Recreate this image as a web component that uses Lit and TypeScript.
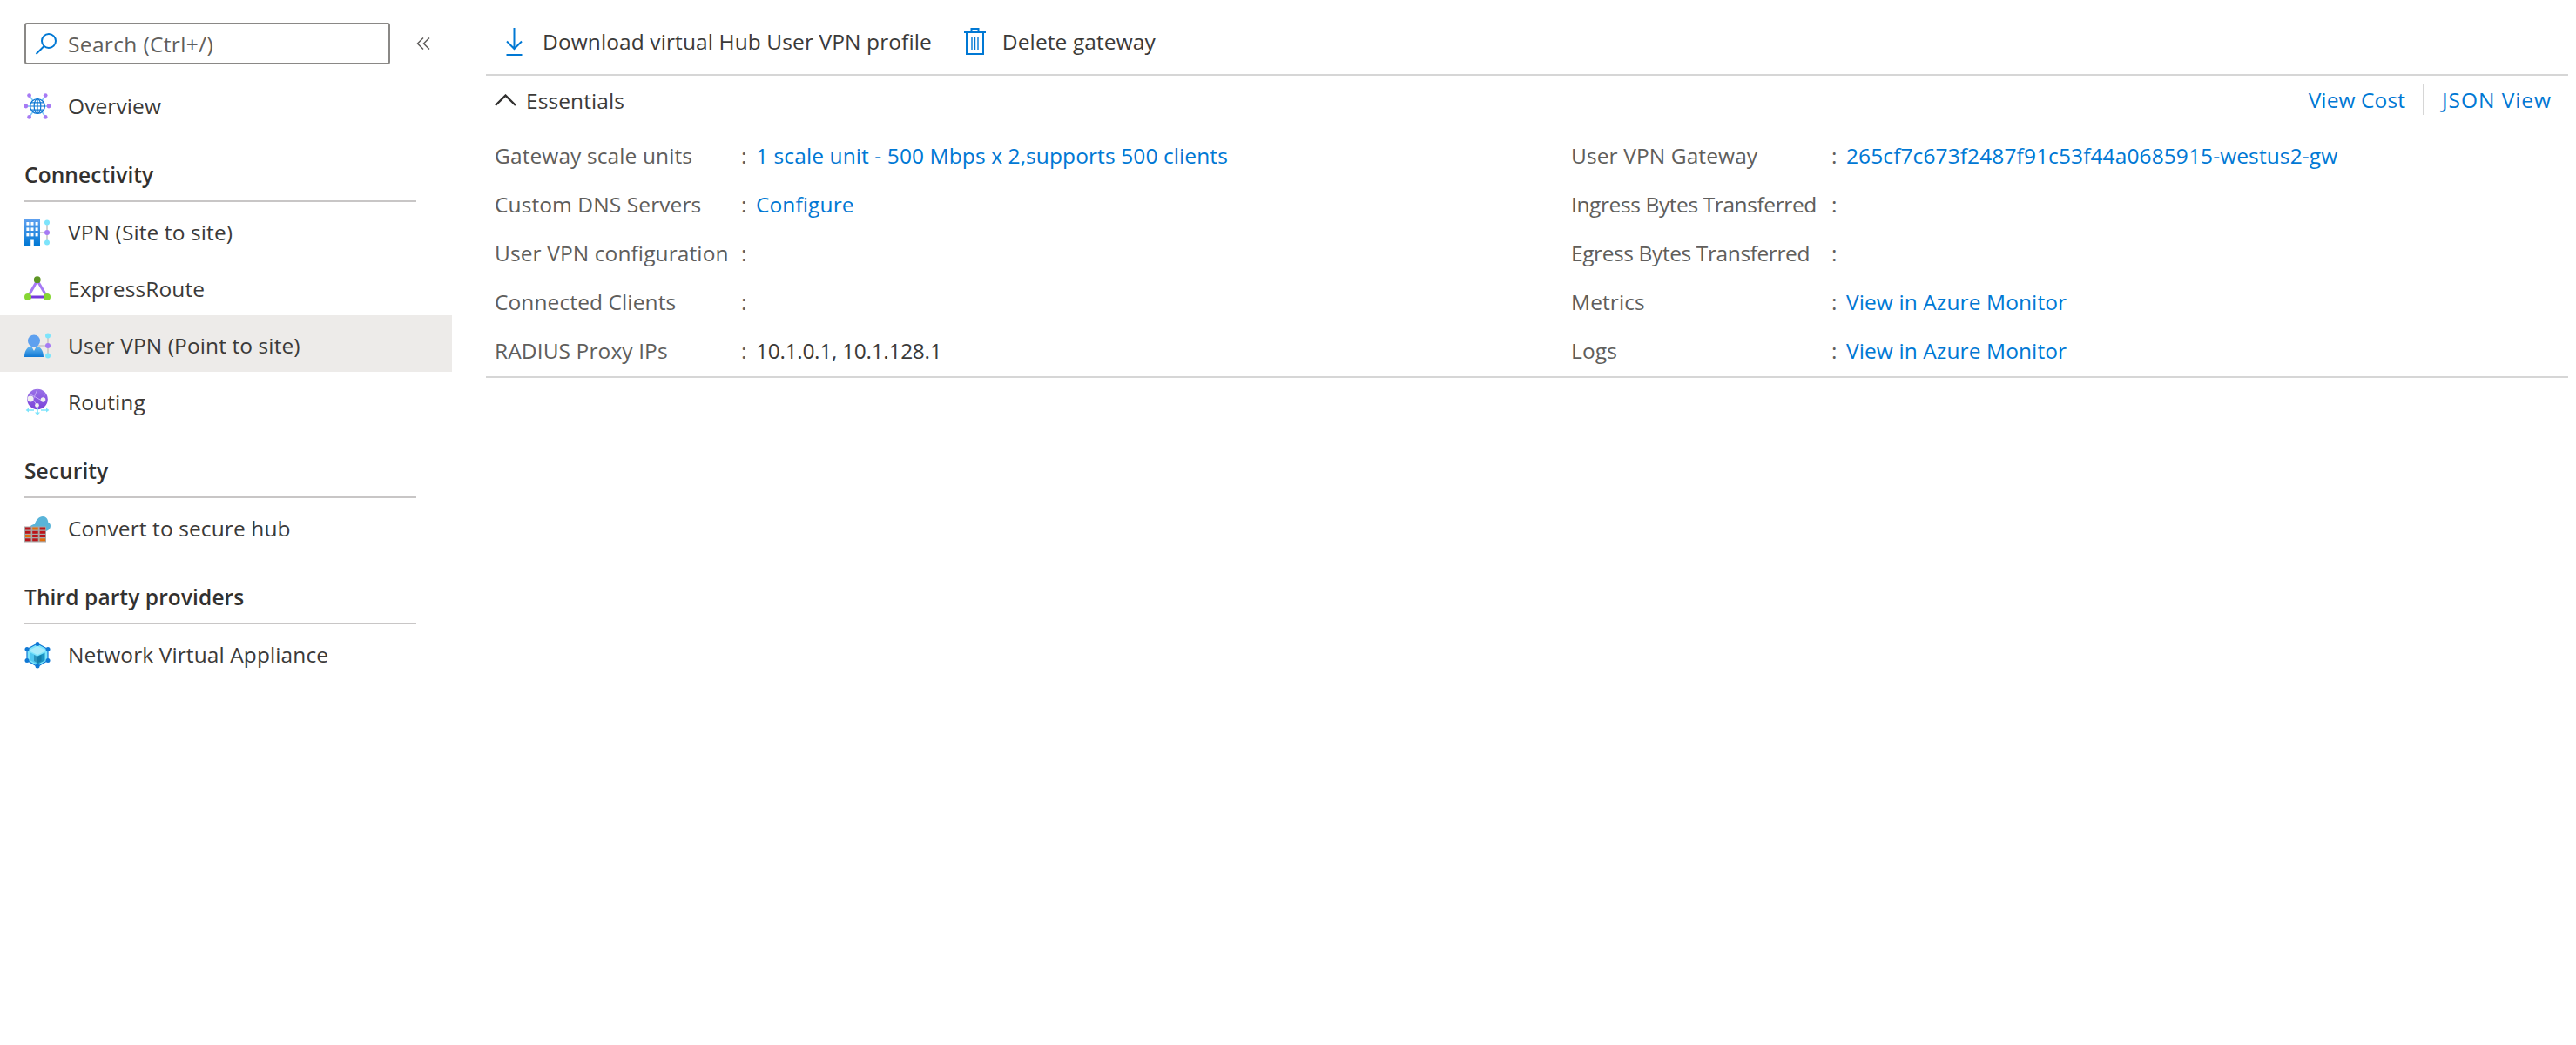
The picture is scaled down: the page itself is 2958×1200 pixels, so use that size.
import { LitElement, html, css, svg } from "lit";
import { customElement } from "lit/decorators.js";

const connector = svg`
  <path d="M26 3V27M18 15H26" stroke="#c8c6c6" stroke-width="1.6" fill="none"/>
  <circle cx="26" cy="3.4" r="3" fill="#7de4fb"/>
  <circle cx="26" cy="15" r="3" fill="#a67af4"/>
  <circle cx="26" cy="26.6" r="3" fill="#7de4fb"/>`;

const icons: Record<string, unknown> = {
  overview: html`<svg viewBox="0 0 30 30" class="ico">
    <path d="M5.4 2.5 11 10M24.4 2.5 19 10M5.4 27.5 11 20M24.4 27.5 19 20M1.5 15H7M28 15H22" stroke="#7ec8f5" stroke-width="1.4"/>
    <circle cx="15" cy="15" r="8.4" fill="#fff" stroke="#0f78d4" stroke-width="1.4"/>
    <ellipse cx="15" cy="15" rx="3.8" ry="8.4" fill="none" stroke="#0f78d4" stroke-width="1.2"/>
    <path d="M15 6.6V23.4M6.6 15H23.4M8 10.8H22M8 19.2H22" stroke="#0f78d4" stroke-width="1.2"/>
    <g fill="#a67af4"><circle cx="5.6" cy="2.6" r="2.4"/><circle cx="24.2" cy="2.6" r="2.4"/><circle cx="1.8" cy="15" r="2.4"/><circle cx="28" cy="15" r="2.4"/><circle cx="5.6" cy="27.4" r="2.4"/><circle cx="24.2" cy="27.4" r="2.4"/></g>
  </svg>`,
  vpn: html`<svg viewBox="0 0 30 30" class="ico">
    <defs><linearGradient id="b1" x1="0" y1="0" x2="0" y2="1"><stop offset="0" stop-color="#5ea0ef"/><stop offset="1" stop-color="#0078d4"/></linearGradient></defs>
    ${connector}
    <rect x="0" y="0" width="18" height="30" fill="url(#b1)"/>
    <g fill="#fff">
      <rect x="2.4" y="3" width="3" height="3.6"/><rect x="7.5" y="3" width="3" height="3.6"/><rect x="12.6" y="3" width="3" height="3.6"/>
      <rect x="2.4" y="9.4" width="3" height="3.6"/><rect x="7.5" y="9.4" width="3" height="3.6"/><rect x="12.6" y="9.4" width="3" height="3.6"/>
      <rect x="2.4" y="15.8" width="3" height="3.6"/><rect x="7.5" y="15.8" width="3" height="3.6"/><rect x="12.6" y="15.8" width="3" height="3.6"/>
      <rect x="7.2" y="23.5" width="3.6" height="6.5"/>
    </g>
  </svg>`,
  express: html`<svg viewBox="0 0 30 30" class="ico">
    <path d="M14.8 5 4 24" stroke="#a67af4" stroke-width="3" fill="none"/>
    <path d="M14.8 5 26 24" stroke="#a67af4" stroke-width="3" fill="none"/>
    <path d="M4 24H26" stroke="#773adc" stroke-width="3"/>
    <circle cx="14.8" cy="4.2" r="3.9" fill="#5e9624"/>
    <circle cx="4" cy="24" r="4" fill="#86d633"/>
    <circle cx="26" cy="24" r="4" fill="#86d633"/>
  </svg>`,
  user: html`<svg viewBox="0 0 30 30" class="ico">
    <defs><linearGradient id="u1" x1="0" y1="0" x2="0" y2="1"><stop offset="0" stop-color="#6bb9f2"/><stop offset="1" stop-color="#0f78d4"/></linearGradient></defs>
    <path d="M27 3V27M15 15H27" stroke="#c8c6c6" stroke-width="1.6" fill="none"/>
    <circle cx="27" cy="3.6" r="3" fill="#7de4fb"/>
    <circle cx="27" cy="15" r="3" fill="#a67af4"/>
    <circle cx="27" cy="26.6" r="3" fill="#7de4fb"/>
    <circle cx="11" cy="9.5" r="7" fill="#5ea0ef"/>
    <path d="M0 28C0 20 4 16 8 15.5L11 21L14 15.5C18 16 22 20 22 28Z" fill="url(#u1)"/>
  </svg>`,
  routing: html`<svg viewBox="0 0 30 30" class="ico">
    <defs><linearGradient id="r1" x1="0" y1="0" x2="0" y2="1"><stop offset="0" stop-color="#9a72e8"/><stop offset="1" stop-color="#7a42d8"/></linearGradient></defs>
    <circle cx="15" cy="11.5" r="11.8" fill="url(#r1)"/>
    <path d="M7 6 22 14M15 0 10 12M10 12 15 19M23 6 21 14" stroke="#c3aaf4" stroke-width="1" fill="none"/>
    <g fill="#f0f0f0"><circle cx="7" cy="11" r="3.4"/><circle cx="21.5" cy="12" r="2.8"/><circle cx="14.5" cy="18.5" r="2.4"/></g>
    <path d="M4 24H11M19 24H26M15 21V27" stroke="#7de4fb" stroke-width="1.6" fill="none"/>
    <path d="M5 21.5 1.6 24 5 26.5ZM25 21.5 28.4 24 25 26.5ZM12 26.5 15 30 18 26.5Z" fill="#7de4fb"/>
  </svg>`,
  firewall: html`<svg viewBox="0 0 30 30" class="ico">
    <path d="M5 17C5 12 9 10 12 10C13 5 17 1 21 1C25 1 27 4 27.4 8C29 8.6 30 10 30 12C30 15 28 17 25 18Z" fill="#59b4d9"/>
    <rect x="0" y="12.5" width="25" height="18" fill="#a8a8a8"/>
    <g fill="#ba141a">
      <rect x="1" y="13.5" width="6.5" height="3"/><rect x="17.6" y="13.5" width="6.5" height="3"/>
      <rect x="1" y="17.8" width="6.5" height="3"/><rect x="9.2" y="17.8" width="6.5" height="3"/><rect x="17.6" y="17.8" width="6.5" height="3"/>
      <rect x="9.2" y="22" width="6.5" height="3"/><rect x="17.6" y="22" width="6.5" height="3"/>
      <rect x="1" y="26.3" width="6.5" height="3"/><rect x="9.2" y="26.3" width="6.5" height="3"/>
    </g>
    <g fill="#e36c0a">
      <rect x="9.2" y="13.5" width="6.5" height="3"/><rect x="1" y="22" width="6.5" height="3"/><rect x="17.6" y="26.3" width="6.5" height="3"/>
    </g>
  </svg>`,
  nva: html`<svg viewBox="0 0 30 30" class="ico">
    <path d="M15 2 27 8.5V21.5L15 28.5L3 21.5V8.5Z" fill="#7de4fb" stroke="#0f78d4" stroke-width="1.2"/>
    <path d="M15 5 25 10 15 15 5 10Z" fill="#a9ecfb"/>
    <path d="M7 12.5 15 16.5V26L7 21.5Z" fill="#50c8f0"/>
    <path d="M23.5 12.5 15 16.5V26L23.5 21.5Z" fill="#1b93c4"/>
    <path d="M11 15 15 17V24.5L11 22ZM19.5 15 15 17V24.5L19.5 22Z" fill="#0f6e96" opacity=".55"/>
    <g fill="#0f78d4"><circle cx="15" cy="2.6" r="2.5"/><circle cx="27" cy="8.5" r="2.5"/><circle cx="27" cy="21.5" r="2.5"/><circle cx="15" cy="28" r="2.5"/><circle cx="3" cy="21.5" r="2.5"/><circle cx="3" cy="8.5" r="2.5"/></g>
  </svg>`,
};

type Row = [string, string, "link" | "text" | ""];
const leftRows: Row[] = [
  ["Gateway scale units", "1 scale unit - 500 Mbps x 2,supports 500 clients", "link"],
  ["Custom DNS Servers", "Configure", "link"],
  ["User VPN configuration", "", ""],
  ["Connected Clients", "", ""],
  ["RADIUS Proxy IPs", "10.1.0.1, 10.1.128.1", "text"],
];
const rightRows: Row[] = [
  ["User VPN Gateway", "265cf7c673f2487f91c53f44a0685915-westus2-gw", "link"],
  ["Ingress Bytes Transferred", "", ""],
  ["Egress Bytes Transferred", "", ""],
  ["Metrics", "View in Azure Monitor", "link"],
  ["Logs", "View in Azure Monitor", "link"],
];

@customElement("app-root")
export class AppRoot extends LitElement {
  static styles = css`
    :host { display: flex; width: 2958px; min-height: 1200px; background: #fff; font-family: "Open Sans", "Noto Sans", Arial, sans-serif; font-size: 24.5px; color: #3b3a39; letter-spacing: 0.1px; }
    * { box-sizing: border-box; }
    .side { width: 519px; flex: none; }
    .searchrow { display: flex; padding: 26px 0 0 28px; height: 87px; align-items: flex-start; }
    .search { width: 420px; height: 48px; border: 2px solid #8a8886; border-radius: 3px; display: flex; align-items: center; padding-left: 10px; gap: 12px; color: #605e5c; letter-spacing: 0.35px; }
    .collapse { width: 16px; height: 14px; margin: 17px 0 0 30px; }
    .row { height: 65px; padding: 4px 0 0 28px; display: flex; align-items: center; gap: 20px; }
    .row.sel { background: #edebe9; }
    .ico { width: 30px; height: 30px; display: block; flex: none; overflow: visible; }
    .head { height: 80px; padding-top: 32.5px; margin: 0 41px 0 28px; font-weight: 600; line-height: 32px; border-bottom: 2px solid #c8c6c6; color: #323130; }
    .main { flex: 1; padding: 0 9px 0 39px; min-width: 0; }
    .toolbar { height: 87px; border-bottom: 2px solid #d6d6d6; display: flex; align-items: center; padding: 10px 0 0 23px; }
    .tool { display: flex; align-items: center; }
    .tool svg { display: block; flex: none; }
    .tool.dl { gap: 23px; margin-right: 37px; }
    .tool.del { gap: 19px; }
    .ess { height: 63px; display: flex; align-items: flex-start; justify-content: space-between; padding: 0 19px 0 10px; }
    .ess-l { height: 56px; display: flex; align-items: center; gap: 11px; }
    .ess-r { height: 54px; display: flex; align-items: center; }
    a { color: #0078d4; text-decoration: none; }
    .json { letter-spacing: 0.95px; }
    .sep { width: 2px; height: 35px; background: #d6d6d6; margin: 0 20px; }
    .grid { display: grid; grid-template-columns: 1236px 1fr; padding: 0 0 2px 10px; border-bottom: 2px solid #d6d6d6; }
    .kv { display: grid; grid-auto-rows: 56px; }
    .kv-l { grid-template-columns: 283px 17px 1fr; }
    .kv-r { grid-template-columns: 299px 17px 1fr; }
    .kv > div { display: flex; align-items: center; }
    .lab { color: #605e5c; white-space: nowrap; }
    .lab.tight { letter-spacing: -0.4px; }
    .col { color: #605e5c; }
    .val { letter-spacing: -0.3px; }
  `;

  private kv(rows: Row[]) {
    return rows.map(
      ([l, v, t]) => html`<div class="lab ${l.endsWith("Transferred") ? "tight" : ""}">${l}</div><div class="col">:</div><div class=${t === "text" ? "val" : ""}>${t === "link" ? html`<a>${v}</a>` : v}</div>`
    );
  }

  private row(icon: string, label: string, sel = false) {
    return html`<div class="row ${sel ? "sel" : ""}">${icons[icon]}<span>${label}</span></div>`;
  }

  render() {
    return html`
      <div class="side">
        <div class="searchrow">
          <div class="search">
            <svg width="26" height="26" viewBox="0 0 26 26" fill="none" stroke="#0078d4" stroke-width="2"><circle cx="16" cy="10" r="8"/><path d="M10.5 16 1.5 25"/></svg>
            <span>Search (Ctrl+/)</span>
          </div>
          <svg class="collapse" viewBox="0 0 16 14" fill="none" stroke="#605e5c" stroke-width="1.5"><path d="M8 0.5 1.5 7 8 13.5M15 0.5 8.5 7 15 13.5"/></svg>
        </div>
        ${this.row("overview", "Overview")}
        <div class="head">Connectivity</div>
        ${this.row("vpn", "VPN (Site to site)")}
        ${this.row("express", "ExpressRoute")}
        ${this.row("user", "User VPN (Point to site)", true)}
        ${this.row("routing", "Routing")}
        <div class="head">Security</div>
        ${this.row("firewall", "Convert to secure hub")}
        <div class="head">Third party providers</div>
        ${this.row("nva", "Network Virtual Appliance")}
      </div>
      <div class="main">
        <div class="toolbar">
          <div class="tool dl">
            <svg width="19" height="32" viewBox="0 0 19 32" fill="none" stroke="#0078d4" stroke-width="2"><path d="M9.5 0V23.5M1 15.5 9.5 24 18 15.5M0.5 31H18.5"/></svg>
            <span>Download virtual Hub User VPN profile</span>
          </div>
          <div class="tool del">
            <svg width="25" height="31" viewBox="0 0 25 31" fill="none" stroke="#0078d4" stroke-width="2"><path d="M0 5H25M8.5 5V1H16.5V5M3 5V30H22V5"/><path d="M9 10V25M12.5 10V25M16 10V25" stroke-width="1.4"/></svg>
            <span>Delete gateway</span>
          </div>
        </div>
        <div class="ess">
          <div class="ess-l">
            <svg width="25" height="14" viewBox="0 0 25 14" fill="none" stroke="#323130" stroke-width="2.4"><path d="M1 13 12.5 1.6 24 13"/></svg>
            <span>Essentials</span>
          </div>
          <div class="ess-r"><a>View Cost</a><span class="sep"></span><a class="json">JSON View</a></div>
        </div>
        <div class="grid">
          <div class="kv kv-l">${this.kv(leftRows)}</div>
          <div class="kv kv-r">${this.kv(rightRows)}</div>
        </div>
      </div>
    `;
  }
}
